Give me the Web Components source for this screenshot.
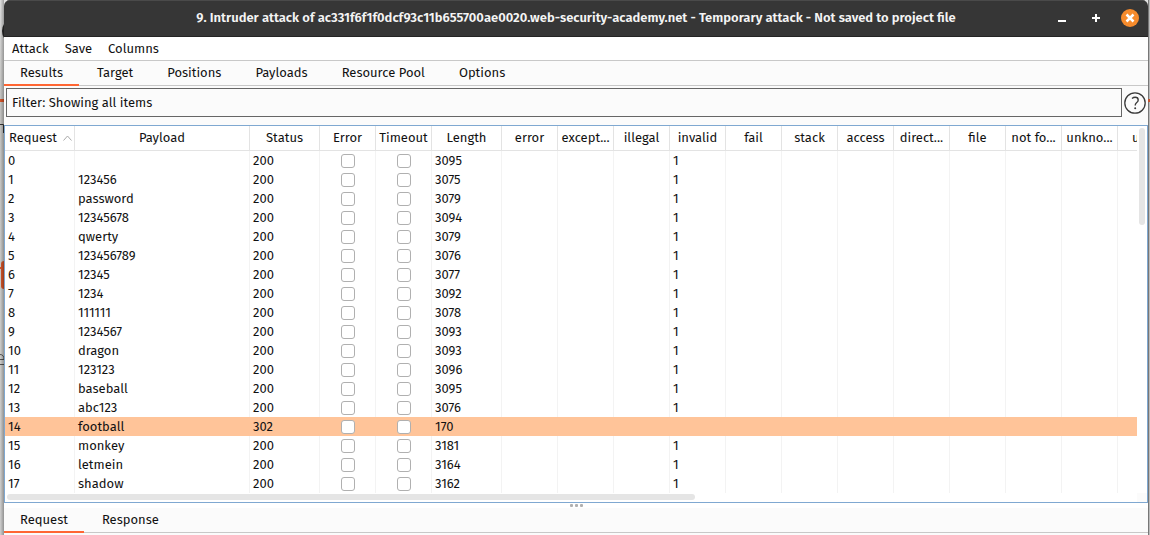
<!DOCTYPE html>
<html lang="en">
<head>
<meta charset="utf-8">
<title>Intruder attack</title>
<style>
  html, body { margin: 0; height: 100%; }
  body {
    font: 13px/18px "Fira Sans", Roboto, "Noto Sans", sans-serif;
    color: #111;
    overflow: hidden;
    background: #c4c4c4;
  }
</style>
</head>
<body>
<desktop-backdrop>
  <attack-window>
    <title-bar slot="title">9. Intruder attack of ac331f6f1f0dcf93c11b655700ae0020.web-security-academy.net - Temporary attack - Not saved to project file</title-bar>
    <menu-bar items="Attack,Save,Columns"></menu-bar>
    <tab-strip label="Attack views" items="Results,Target,Positions,Payloads,Resource Pool,Options"></tab-strip>
    <filter-bar>Filter: Showing all items</filter-bar>
    <results-table></results-table>
    <pane-splitter></pane-splitter>
    <tab-strip label="Message views" items="Request,Response"></tab-strip>
  </attack-window>
</desktop-backdrop>

<script>
class Base extends HTMLElement {
  connectedCallback() {
    if (this.shadowRoot) return;
    this.attachShadow({ mode: 'open' }).innerHTML = this.render();
  }
  get items() { return this.getAttribute('items').split(','); }
}
const RESET = 'button{font:inherit;color:inherit;background:none;border:0;padding:0;margin:0;}';

/* The window behind, of which thin strips show at both sides */
customElements.define('desktop-backdrop', class extends Base {
  render() {
    return `<style>
      :host { display: block; position: relative; height: 100%; box-sizing: border-box; padding: 0 2px 0 4px;
        background: linear-gradient(#e2e2e2, #c6c6c4 20%, #cfcfcd 60%, #d0d0d0); }
      svg { position: absolute; top: 0; }
      .l { left: 0; } .r { right: 0; }
    </style>
    <svg class="l" width="4" height="535" aria-hidden="true">
      <defs><linearGradient id="g"><stop offset="0" stop-color="#000" stop-opacity="0"/><stop offset="1" stop-color="#000" stop-opacity=".3"/></linearGradient></defs>
      <path d="M4 24Q2 27 2 31T4 38z" fill="#2b2b2b"/>
      <rect y="99" width="4" height="3" fill="#d9572b"/>
      <path d="M0 124.500H3.500V133" fill="none" stroke="#333"/>
      <rect x="1" y="261" width="8" height="28" rx="3" fill="#d9572b"/>
      <path d="M0 268h1" stroke="#d9572b" stroke-width="2"/>
      <path d="M0 359.500H4Q4 354.500 0 354.500M0 364.500H4" fill="none" stroke="#555"/>
      <rect width="4" height="535" fill="url(#g)"/>
    </svg>
    <svg class="r" width="2" height="535" aria-hidden="true">
      <rect width="1" height="535" fill="#777"/><rect x="1" width="1" height="535" fill="#bbb"/>
      <rect y="99" width="2" height="3" fill="#c4532f"/>
    </svg>
    <slot></slot>`;
  }
});

customElements.define('attack-window', class extends Base {
  render() {
    return `<style>
      :host { display: flex; flex-direction: column; position: relative; height: 100%; background: #fbfbfb;
        border-radius: 6px 6px 0 0; overflow: hidden; }
    </style><slot name="title"></slot><slot></slot>`;
  }
});

customElements.define('title-bar', class extends Base {
  render() {
    return `<style>${RESET}
      :host { display: grid; grid-template-columns: 1fr auto 1fr; align-items: center; flex: none; height: 37px;
        box-sizing: border-box; padding: 0 9px 1px; background: #363636; color: #f4f4f4;
        border-top: 1px solid #4a4a4a; border-bottom: 1px solid #242424; }
      h1 { grid-column: 2; margin: 0; font: inherit; font-weight: 600; white-space: nowrap; }
      div { display: flex; justify-content: flex-end; gap: 16px; }
      button, svg { display: block; width: 18px; height: 18px; }
    </style>
    <h1><slot></slot></h1>
    <div>
      <button aria-label="Minimize"><svg viewBox="0 0 18 18"><path d="M5 12H13" stroke="#fff" stroke-width="2"/></svg></button>
      <button aria-label="Maximize"><svg viewBox="0 0 18 18"><path d="M5 9H13M9 5V13" stroke="#fff" stroke-width="2"/></svg></button>
      <button aria-label="Close"><svg viewBox="0 0 18 18"><circle cx="9" cy="9" r="9" fill="#f68b2c"/><path d="M5.500 5.500L12.500 12.500M12.500 5.500L5.500 12.500" stroke="#fff" stroke-width="2.500"/></svg></button>
    </div>`;
  }
});

customElements.define('menu-bar', class extends Base {
  render() {
    return `<style>${RESET}
      :host { display: block; flex: none; background: #fff; border-bottom: 1px solid #c8c8c8; }
      nav { display: flex; align-items: center; gap: 16px; height: 23px; padding: 0 8px; }
    </style><nav aria-label="Menu">${this.items.map(t => `<button>${t}</button>`).join('')}</nav>`;
  }
});

customElements.define('tab-strip', class extends Base {
  render() {
    return `<style>${RESET}
      :host { display: block; flex: none; height: 25px; background: linear-gradient(#c8c8c8, #c8c8c8) bottom / 100% 1px no-repeat #fbfbfb; }
      div { display: flex; gap: 2px; height: 25px; }
      button { box-sizing: border-box; padding: 0 16px; border-bottom: 2px solid transparent; }
      [aria-selected=true] { border-bottom-color: #ff6633; }
    </style><div role="tablist" aria-label="${this.getAttribute('label')}">${this.items.map((t, i) =>
      `<button role="tab" aria-selected="${i === 0}">${t}</button>`).join('')}</div>`;
  }
});

customElements.define('filter-bar', class extends Base {
  render() {
    return `<style>${RESET}
      :host { display: flex; flex: none; align-items: center; gap: 2px; padding: 2px 2px 8px; }
      .f { flex: 1; height: 29px; text-align: left; padding: 0 5px; border: 1px solid #666; }
      .h, svg { display: block; width: 22px; height: 22px; }
    </style>
    <button class="f"><slot></slot></button>
    <button class="h" aria-label="Help"><svg viewBox="0 0 22 22" fill="none" stroke="#3a3a3a">
      <circle cx="11" cy="11" r="10.200" stroke-width="1.300"/>
      <path d="M8 6.500Q9.500 5.300 11.200 5.300Q14.200 5.300 14.200 8Q14.200 9.600 12.500 10.800Q11.200 11.800 11.200 13.600" stroke-width="1.400"/>
      <circle cx="11.200" cy="16.200" r="1" fill="#3a3a3a" stroke="none"/></svg></button>`;
  }
});

const COLUMNS = [['Request', 70], ['Payload', 175], ['Status', 70], ['Error', 56], ['Timeout', 56], ['Length', 70],
  ...['error', 'except...', 'illegal', 'invalid', 'fail', 'stack', 'access', 'direct...', 'file', 'not fo...', 'unkno...', 'u'].map(n => [n, 56])];
const RESULTS = [['', 3095], ['123456', 3075], ['password', 3079], ['12345678', 3094], ['qwerty', 3079],
  ['123456789', 3076], ['12345', 3077], ['1234', 3092], ['111111', 3078], ['1234567', 3093], ['dragon', 3093],
  ['123123', 3096], ['baseball', 3095], ['abc123', 3076], ['football', 170], ['monkey', 3181], ['letmein', 3164], ['shadow', 3162]];

customElements.define('results-table', class extends Base {
  render() {
    const total = COLUMNS.reduce((sum, c) => sum + c[1], 0);
    const head = COLUMNS.map(([n], i) => i === 0
      ? `<th scope="col" aria-sort="ascending"><span>${n}<svg width="9" height="6" viewBox="0 0 9 6"><path d="M.5 5.500L4.500 1L8.500 5.500" fill="none" stroke="#aaa"/></svg></span></th>`
      : `<th scope="col">${n}</th>`).join('');
    const rows = RESULTS.map(([p, len], i) => {
      const hit = p === 'football';
      const box = n => `<td class="c"><input type="checkbox" aria-label="${n}, request ${i}"></td>`;
      return `<tr${hit ? ' class="hit"' : ''}><td>${i}</td><td>${p}</td><td>${hit ? 302 : 200}</td>${box('Error')}${box('Timeout')}<td>${len}</td>`
        + COLUMNS.slice(6).map(([n]) => `<td>${n === 'invalid' && !hit ? 1 : ''}</td>`).join('') + '</tr>';
    }).join('');
    return `<style>
      :host { display: grid; grid-template-columns: minmax(0, 1fr) 10px; flex: none; background: #fff; border: 1px solid #7fa8d1; }
      .view { overflow: hidden; }
      table { table-layout: fixed; width: ${total}px; border-collapse: separate; border-spacing: 0; }
      th, td { box-sizing: border-box; padding: 0 3px; white-space: nowrap; overflow: hidden; border-right: 1px solid #f3f3f3; }
      th { height: 25px; padding: 0; font-weight: 400; border-right-color: #e3e3e3; border-bottom: 1px solid #e3e3e3; }
      th:first-child { padding-left: 4px; text-align: left; }
      th:last-child { padding-left: 14px; text-align: left; }
      th span { display: flex; align-items: center; gap: 6px; }
      td { height: 19px; }
      .c { text-align: center; }
      .hit td { background: #ffc499; border-right-color: #ffc499; }
      input { appearance: none; display: block; box-sizing: border-box; width: 14px; height: 14px; margin: 0 auto;
        background: #fff; border: 1px solid #b0b0b0; border-radius: 3px; }
      .v { padding: 2px 2px 0; }
      .v i { display: block; width: 6px; height: 97px; }
      .h { padding: 1px 2px 2px; }
      .h i { display: block; width: 61%; height: 6px; }
      i { background: #e5e5e5; border-radius: 3px; }
      .k { background: #fbfbfb; }
    </style>
    <div class="view"><table><colgroup>${COLUMNS.map(c => `<col style="width:${c[1]}px">`).join('')}</colgroup>
      <thead><tr>${head}</tr></thead><tbody>${rows}</tbody></table></div>
    <div class="v"><i></i></div><div class="h"><i></i></div><div class="k"></div>`;
  }
});

customElements.define('pane-splitter', class extends Base {
  render() {
    return `<style>
      :host { display: flex; flex: none; justify-content: center; align-items: center; gap: 2px; height: 5px; background: #fff; }
      i { width: 3px; height: 3px; border-radius: 1px; background: #b0b0b0; }
    </style><i></i><i></i><i></i>`;
  }
});
</script>
</body>
</html>
